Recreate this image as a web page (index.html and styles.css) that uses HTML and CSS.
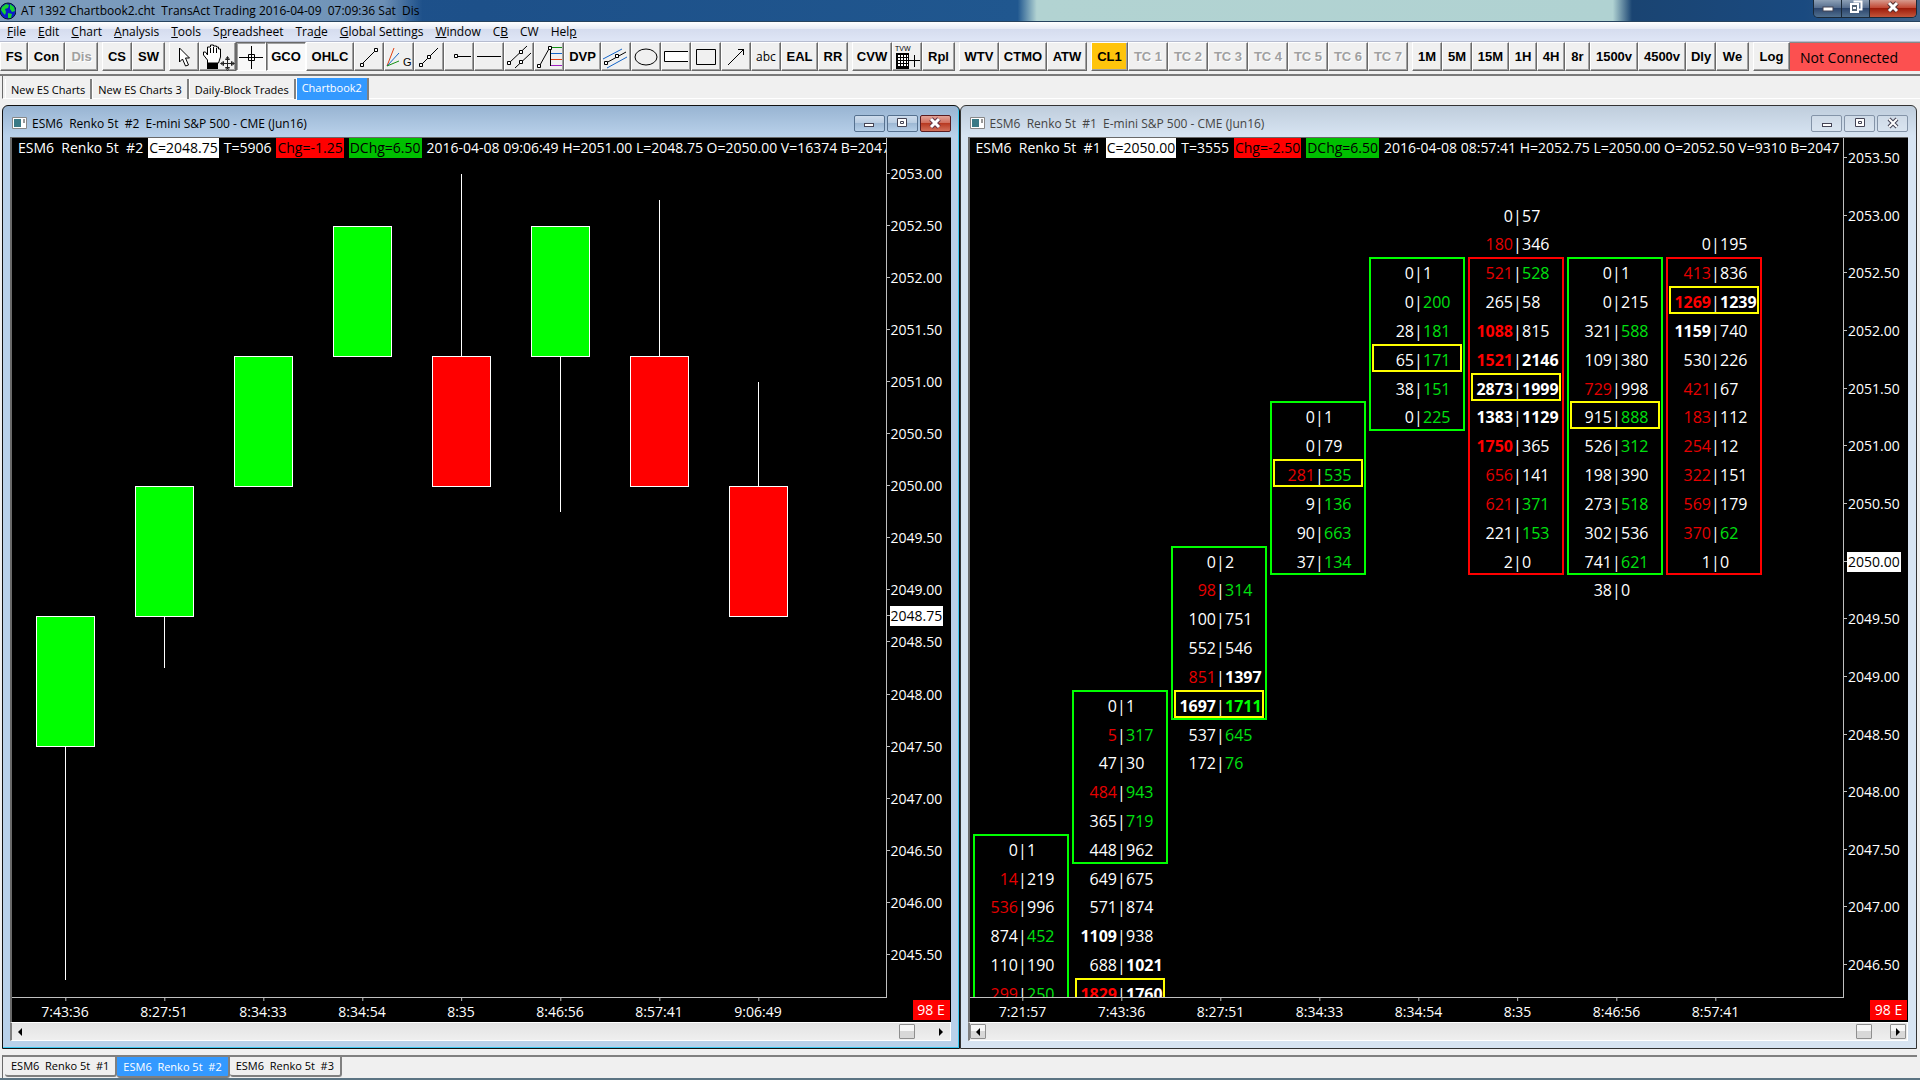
FILE: index.html
```html
<!DOCTYPE html>
<html lang="en">
<head>
    <meta charset="UTF-8">
    <meta name="viewport" content="width=device-width, initial-scale=1">
    <title>AT 1392 Chartbook2.cht</title>
    <link rel="stylesheet" href="styles.css">
</head>
<body>
<header class="title-bar">
    <svg class="globe" width="16" height="18" viewBox="0 0 16 18">
        <circle cx="8" cy="9" r="8" fill="#0a1ec8" stroke="#0b1a30"/>
        <path d="M2 5l4-3 3 1-1 3-3 1 1 3-1 3-2-2-2-3zM10 2l4 3 1 4-3 1-2-3zM8 11l4 1-1 4-3 0z" fill="#19d431"/>
    </svg>
    <h1>AT 1392 Chartbook2.cht  TransAct Trading 2016-04-09  07:09:36 Sat  Dis</h1>
    <div class="app-controls">
        <button aria-label="Minimize"><svg width="12" height="12"><rect x="1" y="6" width="10" height="4" fill="#fff" stroke="#445"/></svg></button>
        <button aria-label="Restore"><svg width="14" height="14"><path d="M4.500 1.500h8v8h-3" fill="none" stroke="#fff" stroke-width="2"/><rect x="2" y="4" width="7" height="8" fill="#567" stroke="#fff" stroke-width="2"/><rect x="4" y="7" width="3" height="2" fill="#fff"/></svg></button>
        <button class="close" aria-label="Close"><svg width="14" height="12"><path d="M3 2l8 8M11 2l-8 8" stroke="#533" stroke-width="5"/><path d="M3 2l8 8M11 2l-8 8" stroke="#fff" stroke-width="3"/></svg></button>
    </div>
</header>

<nav class="menu-bar">
    <button><u>F</u>ile</button>
    <button><u>E</u>dit</button>
    <button><u>C</u>hart</button>
    <button><u>A</u>nalysis</button>
    <button><u>T</u>ools</button>
    <button>S<u>p</u>readsheet</button>
    <button>Tra<u>d</u>e</button>
    <button><u>G</u>lobal Settings</button>
    <button><u>W</u>indow</button>
    <button>C<u>B</u></button>
    <button>CW</button>
    <button>Hel<u>p</u></button>
</nav>

<div class="toolbar">
    <div class="group">
        <button class="w28">FS</button>
        <button class="w37">Con</button>
        <button class="w33" disabled>Dis</button>
    </div>
    <div class="group">
        <button class="w30">CS</button>
        <button class="w33">SW</button>
    </div>
    <div class="group">
        <button class="w30" aria-label="Pointer"><svg width="26" height="26"><path d="M8.500 4v14l3-3 3 7 3-1-3-7h4z" fill="#fff" stroke="#000"/></svg></button>
        <button class="w37" aria-label="Hand"><svg width="34" height="28"><path d="M6.500 20v-3L2.500 12V9h2l2 3V4h3V2h3v1h3v1h2v2h2v8l-2 6z" fill="#fff" stroke="#000"/><path d="M9.500 5v5M12.500 4v6M15.500 5v5" stroke="#000"/><path d="M6 20h11v6H6z"/><path d="M26.500 14v12M20 20.500h13M24.500 16.500l2-3 2 3zM24.500 24.500l2 3 2-3zM22.500 18.500l-3 2 3 2zM30.500 18.500l3 2-3 2z" fill="#fff" stroke="#222"/></svg></button>
        <button class="w30 pressed" aria-label="Crosshair"><svg width="26" height="26"><path d="M1 13.500h24M13.500 2v23" stroke="#000"/><path d="M10.500 10.500h6v6h-6z" fill="none" stroke="#000"/></svg></button>
        <button class="w40 pressed">GCO</button>
        <button class="w48">OHLC</button>
        <button class="w30" aria-label="Line"><svg width="26" height="26"><path d="M6 20L20 6" stroke="#000"/><path d="M4.500 19.500h3v3h-3zM18.500 4.500h3v3h-3z" fill="#fff" stroke="#000"/></svg></button>
        <button class="w30" aria-label="Gann fan"><svg width="28" height="26"><path d="M2 22L9 4" stroke="#e04010"/><path d="M2 22L14 9" stroke="#1565c8"/><path d="M2 22l12-5" stroke="#129012"/><text x="18" y="22" font-size="11" font-weight="normal">G</text></svg></button>
        <button class="w30" aria-label="Extended line"><svg width="26" height="26"><path d="M5 21L22 4" stroke="#000"/><path d="M3.500 19.500h3v3h-3zM11.500 11.500h3v3h-3z" fill="#fff" stroke="#000"/></svg></button>
        <button class="w30" aria-label="Ray"><svg width="26" height="26"><path d="M9 12.500h16" stroke="#000"/><path d="M8.500 10.500h3v3h-3z" fill="#fff" stroke="#000"/></svg></button>
        <button class="w30" aria-label="Horizontal line"><svg width="26" height="26"><path d="M1 12.500h24" stroke="#000"/></svg></button>
        <button class="w30" aria-label="Parallel lines"><svg width="26" height="26"><path d="M3 19L21 2M9 24L25 9" stroke="#000"/><path d="M1.500 17.500h3v3h-3zM13.500 6.500h3v3h-3zM13.500 16.500h3v3h-3z" fill="#fff" stroke="#000"/></svg></button>
        <button class="w30" aria-label="Retracement"><svg width="26" height="28"><path d="M4 22L14 4M14.500 4v19" fill="none" stroke="#000"/><path d="M15 4.500h11" stroke="#129012"/><path d="M15 10.500h11" stroke="#1565c8"/><path d="M15 16.500h11" stroke="#e04010"/><path d="M15 22.500h11" stroke="#a020c0"/><path d="M1.500 21.500h3v3h-3zM12.500 3.500h3v3h-3z" fill="#fff" stroke="#000"/></svg></button>
        <button class="w37">DVP</button>
        <button class="w30" aria-label="Channel"><svg width="28" height="26"><path d="M1 15L20 5M5 24l20-11" stroke="#1565c8"/><path d="M4 19L24 8" stroke="#000"/><path d="M2.500 17.500h3v3h-3zM13.500 10.500h3v3h-3z" fill="#fff" stroke="#000"/></svg></button>
        <button class="w30" aria-label="Ellipse"><svg width="26" height="26"><ellipse cx="13" cy="13" rx="11" ry="8" fill="none" stroke="#000"/></svg></button>
        <button class="w30" aria-label="Price band"><svg width="26" height="26"><path d="M25 7.500H1.500v10H25" fill="#fff" stroke="#000"/></svg></button>
        <button class="w30" aria-label="Rectangle"><svg width="26" height="26"><path d="M3.500 5.500h19v15h-19z" fill="none" stroke="#000"/></svg></button>
        <button class="w30" aria-label="Arrow"><svg width="26" height="26"><path d="M5 21L21 5M15 5.500h5.500V11" fill="none" stroke="#000"/></svg></button>
        <button class="w30 plain">abc</button>
        <button class="w37">EAL</button>
        <button class="w30">RR</button>
    </div>
    <div class="group">
        <button class="w40">CVW</button>
        <button class="w30" aria-label="Trade volume window"><svg width="28" height="28"><text x="2" y="8" font-size="7" font-weight="normal">TVW</text><path d="M3 10h13v16H3z"/><path d="M5 13h10M5 16h10M5 19h10M5 22h10" stroke="#fff" stroke-width="2" stroke-dasharray="2 1"/><path d="M16 17.500h11M21.500 12v12" stroke="#000"/></svg></button>
        <button class="w33">Rpl</button>
    </div>
    <div class="group">
        <button class="w40">WTV</button>
        <button class="w48">CTMO</button>
        <button class="w40">ATW</button>
    </div>
    <div class="group">
        <button class="w37 marked">CL1</button>
        <button class="w40" disabled>TC 1</button>
        <button class="w40" disabled>TC 2</button>
        <button class="w40" disabled>TC 3</button>
        <button class="w40" disabled>TC 4</button>
        <button class="w40" disabled>TC 5</button>
        <button class="w40" disabled>TC 6</button>
        <button class="w40" disabled>TC 7</button>
    </div>
    <div class="group">
        <button class="w30">1M</button>
        <button class="w30">5M</button>
        <button class="w37">15M</button>
        <button class="w28">1H</button>
        <button class="w28">4H</button>
        <button class="w25">8r</button>
        <button class="w48">1500v</button>
        <button class="w48">4500v</button>
        <button class="w30">Dly</button>
        <button class="w33">We</button>
    </div>
    <div class="group">
        <button class="w37">Log</button>
    </div>
    <div class="status">Not Connected</div>
</div>

<nav class="book-tabs">
    <button>New ES Charts</button>
    <button>New ES Charts 3</button>
    <button>Daily-Block Trades</button>
    <button class="active">Chartbook2</button>
</nav>

<main class="workspace">
    <section class="window focused">
        <div class="window-title">
            <svg class="doc" width="15" height="12"><path d="M.5.5h14v11H.5z" fill="#fff" stroke="#888"/><path d="M2 2h7v8H2z" fill="#3a7a86"/><path d="M12 2v4" stroke="#333"/></svg>
            <h2>ESM6  Renko 5t  #2  E-mini S&amp;P 500 - CME (Jun16)</h2>
            <button aria-label="Minimize"><svg width="12" height="12"><rect x="1.500" y="6.500" width="9" height="3" fill="#fff" stroke="#445"/></svg></button>
            <button aria-label="Maximize"><svg width="12" height="12"><path d="M1.500 1.500h9v8h-9zM4.500 4.500h3v2h-3z" fill="#fff" stroke="#445"/></svg></button>
            <button class="close" aria-label="Close"><svg width="12" height="12"><path d="M2 2l8 8M10 2l-8 8" stroke="#634" stroke-width="5"/><path d="M2 2l8 8M10 2l-8 8" stroke="#fff" stroke-width="3"/></svg></button>
        </div>
        <div class="chart" id="candles">
            <div class="plot">
                <p class="quote"><span>ESM6  Renko 5t  #2</span><span class="last">C=2048.75</span><span>T=5906</span><span class="chg">Chg=-1.25</span><span class="dchg">DChg=6.50</span><span>2016-04-08 09:06:49 H=2051.00 L=2048.75 O=2050.00 V=16374 B=2047</span></p>
            </div>
            <div class="prices"></div>
            <div class="times"></div>
            <div class="badge">98 E</div>
        </div>
        <div class="scroll">
            <button aria-label="Scroll left"><svg width="6" height="8"><path d="M5 0v8L1 4z"/></svg></button>
            <div class="thumb"></div>
            <button aria-label="Scroll right"><svg width="6" height="8"><path d="M1 0v8l4-4z"/></svg></button>
        </div>
    </section>

    <section class="window">
        <div class="window-title">
            <svg class="doc" width="15" height="12"><path d="M.5.5h14v11H.5z" fill="#fff" stroke="#888"/><path d="M2 2h7v8H2z" fill="#3a7a86"/><path d="M12 2v4" stroke="#333"/></svg>
            <h2>ESM6  Renko 5t  #1  E-mini S&amp;P 500 - CME (Jun16)</h2>
            <button aria-label="Minimize"><svg width="12" height="12"><rect x="1.500" y="6.500" width="9" height="3" fill="#fff" stroke="#445"/></svg></button>
            <button aria-label="Maximize"><svg width="12" height="12"><path d="M1.500 1.500h9v8h-9zM4.500 4.500h3v2h-3z" fill="#fff" stroke="#445"/></svg></button>
            <button aria-label="Close"><svg width="12" height="12"><path d="M2 2l8 8M10 2l-8 8" stroke="#445" stroke-width="4"/><path d="M2 2l8 8M10 2l-8 8" stroke="#fff" stroke-width="2"/></svg></button>
        </div>
        <div class="chart" id="footprint">
            <div class="plot">
                <p class="quote"><span>ESM6  Renko 5t  #1</span><span class="last">C=2050.00</span><span>T=3555</span><span class="chg">Chg=-2.50</span><span class="dchg">DChg=6.50</span><span>2016-04-08 08:57:41 H=2052.75 L=2050.00 O=2052.50 V=9310 B=2047</span></p>
            </div>
            <div class="prices"></div>
            <div class="times"></div>
            <div class="badge">98 E</div>
        </div>
        <div class="scroll boxed">
            <button aria-label="Scroll left"><svg width="6" height="8"><path d="M5 0v8L1 4z"/></svg></button>
            <div class="thumb"></div>
            <button aria-label="Scroll right"><svg width="6" height="8"><path d="M1 0v8l4-4z"/></svg></button>
        </div>
    </section>
</main>

<nav class="sheet-tabs">
    <button>ESM6  Renko 5t  #1</button>
    <button class="active">ESM6  Renko 5t  #2</button>
    <button>ESM6  Renko 5t  #3</button>
</nav>

<script src="charts.js"></script>
</body>
</html>
```
FILE: styles.css
```css
:root {
    --face: #f0f0f0;
    --ui-font: "Open Sans", "Noto Sans", sans-serif;
    --up: #00ff00;
    --down: #ff0000;
    --axis: #c0c0c0;
}

* {
    box-sizing: border-box;
}

body {
    margin: 0;
    height: 100vh;
    display: flex;
    flex-direction: column;
    overflow: hidden;
    background: var(--face);
    border-bottom: 2px solid #5b7483;
    font-family: var(--ui-font);
    font-size: 12px;
    color: #000;
}

button {
    flex: none;
    margin: 0;
    padding: 0;
    border: none;
    background: none;
    color: inherit;
    font: inherit;
    white-space: pre;
}

h1, h2, p {
    margin: 0;
    font-size: inherit;
    font-weight: normal;
    white-space: pre;
}

/* Application title */
.title-bar {
    flex: none;
    display: flex;
    align-items: center;
    gap: 5px;
    height: 22px;
    border-bottom: 1px solid #26435f;
    background:
        linear-gradient(90deg, #7e9dbd 0, #7396ba 16%, #6c8fb5 20%, transparent 22%),
        linear-gradient(90deg, #1f5290 0, #1d5089 25%, #20578f 53%, #b2d3d2 54%, #b0d2d2 84%, #1a4472 85%, #1a4a80 94%, #3f6288 100%);
}

.title-bar h1 {
    flex: 1;
}

.app-controls {
    display: flex;
    align-self: flex-start;
    height: 18px;
    margin-right: 3px;
    border: 1px solid #1a2938;
    border-top: none;
    border-radius: 0 0 5px 5px;
    overflow: hidden;
}

.app-controls button {
    width: 28px;
    border-right: 1px solid #1a2938;
    background: linear-gradient(#8da0b6, #50688a 50%, #2c456c 50%, #51708f);
}

.app-controls .close {
    width: 46px;
    border-right: none;
    background: linear-gradient(#d79a8d, #c0402c 50%, #9e1c0a 50%, #c4553a);
}

.menu-bar {
    flex: none;
    display: flex;
    gap: 12px;
    height: 20px;
    padding-left: 7px;
    border-bottom: 1px solid #b6bccf;
    background: linear-gradient(#fff, #e8ecf6 35%, #d5dcee 35%, #dfe6f6);
}

/* Toolbar */
.toolbar {
    flex: none;
    display: flex;
    gap: 4px;
    height: 34px;
    padding-bottom: 3px;
    border-bottom: 2px solid #7a7a7a;
}

.group {
    display: flex;
}

.toolbar button {
    display: flex;
    align-items: center;
    justify-content: center;
    border: 1px solid;
    border-color: #fff #696969 #696969 #fff;
    box-shadow: inset -1px -1px #a0a0a0;
    background: var(--face);
    font: bold 13px "Liberation Sans", Arial, sans-serif;
}

.toolbar svg {
    flex: none;
}

.toolbar button.plain {
    font: 12px var(--ui-font);
}

.toolbar button:disabled {
    color: #a0a0a0;
    text-shadow: 1px 1px #fff;
}

.toolbar button.pressed {
    border-color: #696969 #fff #fff #696969;
    box-shadow: inset 1px 1px #a0a0a0;
    background: #f8f8f8;
}

.toolbar button.marked {
    background: #ffc40c;
}

.w25 { width: 25px; }
.w28 { width: 28px; }
.w30 { width: 30px; }
.w33 { width: 33px; }
.w37 { width: 37px; }
.w40 { width: 40px; }
.w48 { width: 48px; }

.status {
    flex: 1;
    display: flex;
    align-items: center;
    margin-left: -4px;
    padding-left: 10px;
    background: #fc5050;
    border-top: 1px solid #888;
    font-size: 14px;
    white-space: nowrap;
}

/* Chartbook tabs */
.book-tabs {
    flex: none;
    display: flex;
    height: 23px;
    margin-left: 2px;
    padding: 2px 0 0 2px;
    border-left: 1px solid #696969;
    border-bottom: 1px solid #fff;
    font-size: 11px;
}

.book-tabs button {
    height: 20px;
    margin-top: 1px;
    padding: 0 5px;
    border-left: 1px solid #fff;
    border-right: 2px solid #808080;
}

.book-tabs .active {
    height: 22px;
    margin-top: 0;
    padding-bottom: 3px;
    background: #3399ff;
    color: #fff;
}

/* Chart windows */
.workspace {
    flex: 1;
    min-height: 0;
    display: grid;
    grid-template-columns: 1fr 1fr;
    margin: 6px 3px 0 2px;
}

.window {
    min-width: 0;
    display: flex;
    flex-direction: column;
    padding: 0 8px 7px 7px;
    border: 1px solid #333;
    border-radius: 6px 6px 0 0;
    background: linear-gradient(#bfcddc, #d7e4f2 30px);
    color: #444;
}

.window.focused {
    border-color: #111;
    box-shadow: inset -1px -1px #3cc8f0;
    background: linear-gradient(#98b4d2, #b9d1ea 30px);
    color: #000;
}

.window-title {
    flex: none;
    display: flex;
    align-items: center;
    gap: 2px;
    height: 31px;
    padding-top: 3px;
}

.window-title .doc {
    margin: 0 3px 0 2px;
}

.window-title h2 {
    flex: 1;
}

.window-title button {
    display: flex;
    align-items: center;
    justify-content: center;
    width: 31px;
    height: 17px;
    border: 1px solid #8494a8;
    border-radius: 2px;
    background: rgba(255, 255, 255, 0.15);
}

.focused .window-title button {
    border-color: #56718f;
    background: linear-gradient(#cfdded, #b7cbe1 50%, #9db8d4 50%, #b6cfe8);
}

.focused .window-title .close {
    border-color: #5a1c20;
    background: linear-gradient(#e3a398, #cf6a58 50%, #b83a22 50%, #d2705a);
}

.chart {
    flex: 1;
    min-height: 0;
    display: grid;
    grid-template: 1fr 24px / 1fr 64px;
    border: 1px solid #696969;
    border-width: 1px 0 0 2px;
    background: #000;
    color: #fff;
    font-size: 14px;
    line-height: 20px;
}

.plot {
    position: relative;
    min-width: 0;
    overflow: hidden;
    border: 1px solid var(--axis);
    border-width: 0 1px 1px 0;
}

.quote {
    display: flex;
    gap: 5px;
    height: 20px;
    padding-left: 6px;
}

.quote span {
    flex: none;
}

.last, .chg, .dchg {
    padding: 0 1px;
    color: #000;
}

.last { background: #fff; }
.chg { background: var(--down); }
.dchg { background: #00c000; }

.prices, .times {
    position: relative;
}

.price, .time {
    position: absolute;
}

.price {
    left: 0;
    height: 20px;
    padding: 0 1px 0 4px;
    transform: translateY(-50%);
}

.price::before {
    content: "";
    position: absolute;
    left: 0;
    top: 9px;
    width: 3px;
    height: 1px;
    background: var(--axis);
}

.price.now {
    left: 3px;
    padding: 0 1px;
    background: #fff;
    color: #000;
}

.price.now::before {
    left: -3px;
}

.time {
    top: 4px;
    transform: translateX(-50%);
}

.time::before {
    content: "";
    position: absolute;
    left: 50%;
    top: -4px;
    width: 1px;
    height: 3px;
    background: var(--axis);
}

.badge {
    place-self: center end;
    width: 37px;
    margin-right: 1px;
    background: var(--down);
    text-align: center;
}

/* Candles */
.wick {
    position: absolute;
    width: 1px;
    background: #fff;
}

.candle {
    position: absolute;
    width: 59px;
    border: 1px solid #fff;
}

.candle.up { background: var(--up); }
.candle.down { background: var(--down); }

/* Footprint */
.bar, .poc {
    position: absolute;
    border: 2px solid;
}

.bar { width: 96px; }
.bar.up { border-color: var(--up); }
.bar.down { border-color: var(--down); }

.poc {
    width: 90px;
    height: 28px;
    border-color: #ffff00;
}

.level {
    position: absolute;
    display: grid;
    grid-template-columns: 1fr 9px 1fr;
    width: 96px;
    font-size: 16px;
    text-align: center;
}

.level :first-child { text-align: right; }
.level :last-child { text-align: left; }
.ask { color: #00e010; }
.bid { color: #e60000; }
.bold { font-weight: bold; }
.ask.bold { color: var(--up); }
.bid.bold { color: var(--down); }

/* Scroll bars */
.scroll {
    flex: none;
    display: flex;
    align-items: center;
    height: 19px;
    padding: 0 1px 0 0;
    border: 1px solid #fff;
    border-left: 2px solid #808080;
    background: linear-gradient(#e3e3e3, #efefef);
}

.scroll button, .thumb {
    display: flex;
    align-items: center;
    justify-content: center;
    width: 16px;
    height: 15px;
    border: 1px solid transparent;
    border-radius: 1px;
}

.scroll .thumb {
    margin: 0 18px 0 auto;
}

.scroll .thumb, .boxed button {
    border-color: #8f8f8f;
    background: linear-gradient(#f6f6f6 50%, #d8d8d8 50%);
}

/* Sheet tabs */
.sheet-tabs {
    flex: none;
    display: flex;
    height: 23px;
    margin: 6px 3px 0 2px;
    padding-left: 2px;
    border-top: 2px solid #808080;
    border-left: 1px solid #696969;
}

.sheet-tabs button {
    height: 20px;
    padding: 0 6px 2px;
    border: 1px solid #808080;
    border-width: 0 2px 2px 0;
    border-radius: 0 0 3px 3px;
    font-size: 11px;
}

.sheet-tabs .active {
    height: 21px;
    padding-top: 2px;
    background: #3399ff;
    color: #fff;
}
```
FILE: charts.js
```js
const BAR_STEP = 99;

const candleTimes = ['7:43:36', '8:27:51', '8:34:33', '8:34:54', '8:35', '8:46:56', '8:57:41', '9:06:49'];
// [direction, body top, body bottom, high, low]
const candles = [
    ['up', 2048.75, 2047.5, 2048.75, 2045.25],
    ['up', 2050, 2048.75, 2050, 2048.25],
    ['up', 2051.25, 2050, 2051.25, 2050],
    ['up', 2052.5, 2051.25, 2052.5, 2051.25],
    ['down', 2051.25, 2050, 2053, 2050],
    ['up', 2052.5, 2051.25, 2052.5, 2049.75],
    ['down', 2051.25, 2050, 2052.75, 2050],
    ['down', 2050, 2048.75, 2051, 2048.75]
];

// "*" marks an imbalance: red on the bid side, green on the ask side
const bars = [
    { time: '7:21:57', dir: 'up', top: 2047.5, first: 0, count: 11, poc: -1,
      levels: '0|1 14*|219 536*|996 874|452* 110|190 299*|250*' },
    { time: '7:43:36', dir: 'up', top: 2048.75, first: 0, count: 6, poc: 10,
      levels: '0|1 5*|317* 47|30 484*|943* 365|719* 448|962 649|675 571|874 1109|938 688|1021 1829*|1760' },
    { time: '8:27:51', dir: 'up', top: 2050, first: 0, count: 6, poc: 5,
      levels: '0|2 98*|314* 100|751 552|546 851*|1397 1697|1711* 537|645* 172|76*' },
    { time: '8:34:33', dir: 'up', top: 2051.25, first: 0, count: 6, poc: 2,
      levels: '0|1 0|79 281*|535* 9|136* 90|663* 37|134*' },
    { time: '8:34:54', dir: 'up', top: 2052.5, first: 0, count: 6, poc: 3,
      levels: '0|1 0|200* 28|181* 65|171* 38|151* 0|225*' },
    { time: '8:35', dir: 'down', top: 2053, first: 2, count: 11, poc: 6,
      levels: '0|57 180*|346 521*|528* 265|58 1088*|815 1521*|2146 2873|1999 1383|1129 1750*|365 656*|141 621*|371* 221|153* 2|0' },
    { time: '8:46:56', dir: 'up', top: 2052.5, first: 0, count: 11, poc: 5,
      levels: '0|1 0|215 321|588* 109|380 729*|998 915|888* 526|312* 198|390 273|518* 302|536 741|621* 38|0' },
    { time: '8:57:41', dir: 'down', top: 2052.75, first: 1, count: 11, poc: 2,
      levels: '0|195 413*|836 1269*|1239 1159|740 530|226 421*|67 183*|112 254*|12 322*|151 569*|179 370*|62* 1|0' }
];

function add(parent, className, style, text) {
    const el = document.createElement('div');
    el.className = className;
    for (const key in style) {
        el.style[key] = Math.round(style[key]) + 'px';
    }
    if (text !== undefined) el.textContent = text;
    parent.appendChild(el);
    return el;
}

function drawAxes(chart, y, from, to, now, times, firstX) {
    const prices = chart.querySelector('.prices');
    for (let p = from; p >= to; p -= 0.5) {
        if (p !== now) add(prices, 'price', { top: y(p) }, p.toFixed(2));
    }
    add(prices, 'price now', { top: y(now) }, now.toFixed(2));
    times.forEach((t, i) => add(chart.querySelector('.times'), 'time', { left: firstX + i * BAR_STEP }, t));
}

function drawCandles() {
    const chart = document.getElementById('candles');
    const plot = chart.querySelector('.plot');
    const y = p => 36 + (2053 - p) * 104.1;
    drawAxes(chart, y, 2053, 2045.5, 2048.75, candleTimes, 53);
    candles.forEach(([dir, top, bottom, high, low], i) => {
        const x = 53 + i * BAR_STEP;
        add(plot, 'wick', { left: x, top: y(high), height: y(low) - y(high) });
        add(plot, 'candle ' + dir, { left: x - 29, top: y(top), height: y(bottom) - y(top) + 1 });
    });
}

function drawFootprint() {
    const chart = document.getElementById('footprint');
    const plot = chart.querySelector('.plot');
    const y = p => 20 + (2053.5 - p) * 115.3;
    drawAxes(chart, y, 2053.5, 2046.5, 2050, bars.map(b => b.time), 53);
    bars.forEach((bar, i) => {
        const x = 3 + i * BAR_STEP;
        const row = n => y(bar.top - n * 0.25);
        add(plot, 'bar ' + bar.dir, { left: x, top: row(bar.first) - 16, height: bar.count * 28.85 + 1 });
        if (bar.poc >= 0) add(plot, 'poc', { left: x + 3, top: row(bar.poc) - 16 });
        bar.levels.split(' ').forEach((pair, n) => {
            const level = add(plot, 'level', { left: x + 2, top: row(n) - 10 });
            const [bid, ask] = pair.split('|');
            [[bid, 'bid'], ['|', ''], [ask, 'ask']].forEach(([value, side]) => {
                const size = parseInt(value) > 1000 ? ' bold' : '';
                add(level, (value.endsWith('*') ? side : '') + size, {}, value.replace('*', ''));
            });
        });
    });
}

drawCandles();
drawFootprint();
```
